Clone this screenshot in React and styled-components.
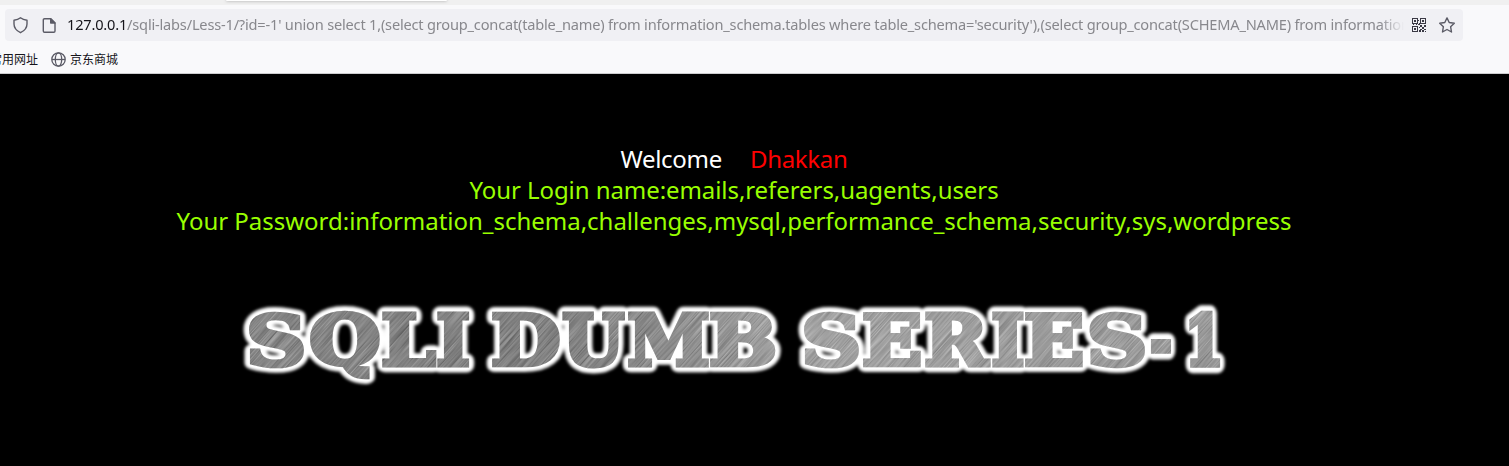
import React, { useMemo } from 'react';
import styled, { createGlobalStyle } from 'styled-components';

const Global = createGlobalStyle`
  html, body { margin: 0; background: #000; overflow: hidden; }
  * { box-sizing: border-box; }
`;
const Window = styled.div`
  width: 1509px; height: 466px; display: flex; flex-direction: column; background: #000;
  font-family: "Noto Sans", "Noto Sans CJK SC", sans-serif;
`;
const TabStrip = styled.div`height: 5px; background: #f0f0f0; flex: none; padding-left: 226px;`;
const Tab = styled.div`
  width: 221px; height: 1px; background: #fff;
  border-radius: 0 0 4px 4px; box-shadow: 0 0 3px rgba(0,0,0,.5);
`;
const NavBar = styled.div`height: 41px; flex: none; background: #f9f9fb; padding: 4px 46px 5px 5px;`;
const UrlBar = styled.div`
  height: 32px; background: #f0f0f4; border-radius: 4px; display: flex; align-items: center; padding: 0 7px 1px 6px;
`;
const Icon = styled.svg`display: block; flex: none; margin-right: ${p => p.$gap || 0}px;`;
const Url = styled.div`
  flex: none; width: 1337px; overflow: hidden; white-space: nowrap; font-size: 14.6px; line-height: 24px; height: 26px;
  letter-spacing: -0.195px; color: #88888d; margin-right: 8px;
  mask-image: linear-gradient(to right, #000 1312px, transparent 1337px);
`;
const Host = styled.span`color: #15141a;`;
const Bookmarks = styled.div`
  height: 28px; flex: none; background: #f9f9fb; border-bottom: 1px solid #ccccce; display: flex; align-items: center;
  padding-bottom: 1px;
  font-family: "Noto Sans CJK SC", sans-serif; font-size: 12px; color: #15141a; overflow: hidden; white-space: nowrap;
`;
const Label = styled.span`
  margin-left: ${p => p.$left}px; margin-right: ${p => p.$right || 0}px; line-height: 18px; padding-bottom: 1px;
`;
const Page = styled.main`
  flex: 1; display: flex; flex-direction: column; align-items: center; padding: 69px 41px 0 0; font-size: 24px;
`;
const Line = styled.div`
  line-height: 31px; height: 31px; white-space: pre; color: ${p => p.$color || '#99ff00'};
  letter-spacing: ${p => p.$spacing || 0}px;
`;
const Name = styled.span`color: #f00; margin-left: 28px;`;
const Banner = styled.svg`display: block; width: 1000px; height: 100px; margin-top: 54px; flex: none;`;

const LETTERS = [
  ['S', 248.5, 304.5], ['Q', 309, 379.5], ['L', 382, 436.5], ['I', 437, 469.5],
  ['D', 492, 560], ['U', 562, 625.5], ['M', 627, 709.5], ['B', 710, 776],
  ['S', 803.5, 859.5], ['E', 863, 921], ['R', 925, 991], ['I', 992, 1024], ['E', 1025, 1083],
  ['S', 1089, 1145.5], ['-', 1150, 1172], ['1', 1188.5, 1220.5],
];
const FACE = '"DejaVu Serif"';
const SIZE = 70;
const WEIGHT = 5;

function Letters({ grow = 0, ...rest }) {
  const glyphs = useMemo(() => {
    const ctx = document.createElement('canvas').getContext('2d');
    ctx.font = `bold ${SIZE}px ${FACE}`;
    return LETTERS.map(([ch, x0, x1]) => {
      const m = ctx.measureText(ch);
      const left = -m.actualBoundingBoxLeft;
      const sx = (x1 - x0 - WEIGHT) / (m.actualBoundingBoxRight - left);
      return { ch, sx, tx: x0 + WEIGHT / 2 - left * sx };
    });
  }, []);
  return (
    <g fontFamily={FACE} fontWeight="bold" fontSize={SIZE} strokeWidth={WEIGHT + grow} strokeLinejoin="round" {...rest}>
      {glyphs.map((g, i) => (
        <text key={i} transform={`translate(${g.tx} 364.6) scale(${g.sx} 1)`} vectorEffect="non-scaling-stroke">{g.ch}</text>
      ))}
    </g>
  );
}

const FINDERS = [[0, 0], [8, 0], [0, 8]];
const MODULES = [
  [6, 2, 1, 1], [7, 5, 1, 2], [6, 6, 1, 1], [1, 6, 1, 1], [4, 6, 1, 1],
  [8, 7, 2, 2], [12, 7, 2, 2], [10, 9, 2, 2], [7, 9, 1, 1], [8, 11, 2, 1], [12, 11, 2, 1], [10, 12, 2, 2], [7, 12, 2, 2], [13, 13, 1, 1],
];

export default function App() {
  return (
    <Window>
      <Global />
      <TabStrip><Tab /></TabStrip>
      <NavBar>
        <UrlBar>
          <Icon $gap={12} width="18" height="18" viewBox="0 0 18 18" fill="none" stroke="#5b5b66" strokeWidth="1.4" strokeLinejoin="round">
            <path d="M9.500 1.700Q12 3.700 16 4.200V8c0 4-2.500 6.700-6.500 8.700C5.500 14.700 3 12 3 8V4.200Q7 3.700 9.500 1.700Z" />
          </Icon>
          <Icon $gap={10} width="16" height="18" viewBox="0 0 16 18" fill="none" stroke="#5b5b66" strokeWidth="1.4" strokeLinejoin="round">
            <path d="M3.500 2.700h6.200L14 7v8a1.200 1.200 0 0 1-1.200 1.200H3.500A1.200 1.200 0 0 1 2.300 15V3.900A1.200 1.200 0 0 1 3.500 2.700Z" /><path d="M9.700 2.700V7H14Z" fill="#5b5b66" />
          </Icon>
          <Url><Host>127.0.0.1</Host>/sqli-labs/Less-1/?id=-1' union select 1,(select group_concat(table_name) from information_schema.tables where table_schema='security'),(select group_concat(SCHEMA_NAME) from information_schema.schemata)</Url>
          <Icon $gap={12} width="14" height="14" viewBox="0 0 14 14" fill="#3a3944" shapeRendering="crispEdges">
            {FINDERS.map(([x, y]) => (
              <path key={`f${x}-${y}`} fillRule="evenodd" d={`M${x} ${y}h6v6h-6zM${x + 1} ${y + 1}v4h4v-4zM${x + 2} ${y + 2}h2v2h-2z`} />
            ))}
            {MODULES.map(([x, y, w, h]) => <rect key={`${x}-${y}`} x={x} y={y} width={w} height={h} />)}
          </Icon>
          <Icon width="18" height="18" viewBox="0 0 18 18" fill="none" stroke="#5b5b66" strokeWidth="1.4" strokeLinejoin="round">
            <path d="m9 1.900 2.200 4.600 5.100.7-3.700 3.500.9 5.300L9 13.500 4.500 16l.9-5.300L1.700 7.200l5.100-.7Z" />
          </Icon>
        </UrlBar>
      </NavBar>
      <Bookmarks>
        <Label $left={-10} $right={13}>常用网址</Label>
        <Icon width="15" height="15" viewBox="0 0 15 15" fill="none" stroke="#5b5b66" strokeWidth="1.300">
          <circle cx="7.500" cy="7.500" r="6.700" /><ellipse cx="7.500" cy="7.500" rx="3.200" ry="6.700" /><path d="M1 7.500h13" />
        </Icon>
        <Label $left={4}>京东商城</Label>
      </Bookmarks>
      <Page>
        <Line $color="#fff" $spacing={-0.3}>Welcome<Name>Dhakkan</Name></Line>
        <Line $spacing={-0.07}>Your Login name:emails,referers,uagents,users</Line>
        <Line $spacing={-0.015}>Your Password:information_schema,challenges,mysql,performance_schema,security,sys,wordpress</Line>
        <Banner viewBox="234 290 1000 100">
          <defs>
            <filter id="glow" x="-5%" y="-30%" width="110%" height="160%"><feGaussianBlur stdDeviation="1.5" /></filter>
            <filter id="brushed" x="0" y="0" width="100%" height="100%" colorInterpolationFilters="sRGB">
              <feTurbulence type="fractalNoise" baseFrequency="0.02 0.75" numOctaves="2" seed="4" />
              <feColorMatrix values="0.42 0 0 0 0.33  0.42 0 0 0 0.33  0.42 0 0 0 0.33  0 0 0 0 1" />
            </filter>
            <linearGradient id="sheen" x1="0" x2="1">
              <stop offset="0" stopColor="#000" stopOpacity=".04" /><stop offset=".25" stopColor="#000" stopOpacity=".06" />
              <stop offset=".55" stopColor="#fff" stopOpacity=".2" /><stop offset="1" stopColor="#fff" stopOpacity=".12" />
            </linearGradient>
            <mask id="letters" maskUnits="userSpaceOnUse" x="234" y="290" width="1000" height="100"><Letters fill="#fff" stroke="#fff" strokeLinejoin="miter" /></mask>
          </defs>
          <Letters grow={10} fill="#fff" stroke="#fff" filter="url(#glow)" />
          <Letters grow={3} fill="#fff" stroke="#fff" />
          <g mask="url(#letters)">
            <g transform="rotate(-48 734 340)"><rect x="334" y="-60" width="800" height="800" filter="url(#brushed)" /></g>
            <rect x="234" y="290" width="1000" height="100" fill="url(#sheen)" />
          </g>
        </Banner>
      </Page>
    </Window>
  );
}
